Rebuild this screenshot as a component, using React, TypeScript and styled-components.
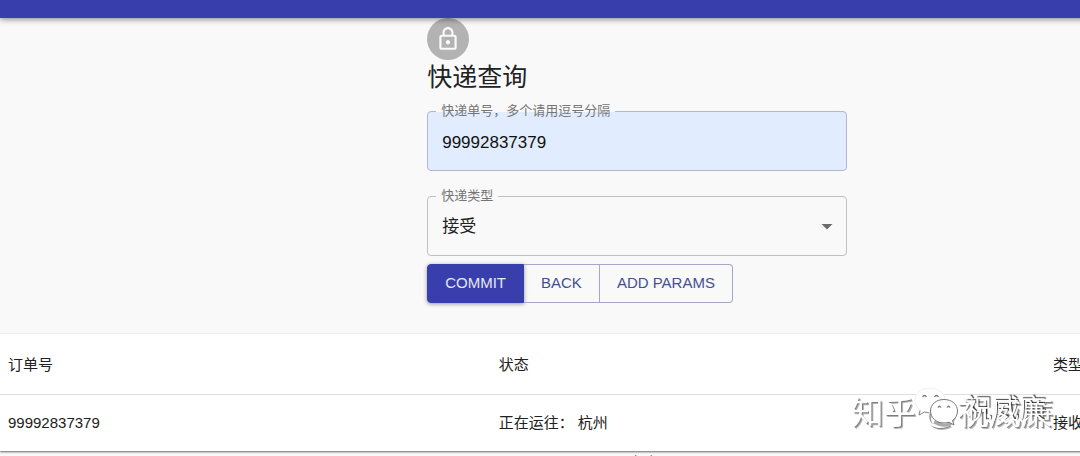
import React from "react";
import styled, { createGlobalStyle } from "styled-components";

const GlobalStyle = createGlobalStyle`
  * { box-sizing: border-box; }
  body {
    margin: 0;
    overflow: hidden;
    background: #f9f9f9;
    color: #212121;
    font-family: "Liberation Sans", "Noto Sans CJK SC", sans-serif;
  }
`;

/* The page is wider than the viewport, as it is when scrolled to its left edge. */
const Viewport = styled.div`
  height: 100vh;
  overflow: hidden;
`;

const Page = styled.div`
  width: 118%;
`;

const AppBar = styled.header`
  position: relative;
  height: 18px;
  background: #383fac;
  box-shadow: 0 1px 6px rgba(0, 0, 0, 0.5);
`;

const Container = styled.main`
  width: 420px;
  max-width: 100%;
  margin: 0 auto;
  display: flex;
  flex-direction: column;
  align-items: flex-start;
`;

const Avatar = styled.div`
  display: flex;
  align-items: center;
  justify-content: center;
  width: 42px;
  height: 42px;
  border-radius: 50%;
  background: #b3b3b3;
  color: #fafafa;
`;

const Title = styled.h1`
  margin: 0;
  font-size: 25px;
  line-height: 34px;
  font-weight: 400;
`;

const Form = styled.form`
  width: 100%;
  display: flex;
  flex-direction: column;
`;

const Field = styled.div`
  position: relative;
  margin-top: 17px;
  & + & { margin-top: 25px; }
`;

const Label = styled.label<{ $filled?: boolean }>`
  position: absolute;
  top: -10px;
  left: 9px;
  padding: 0 5px;
  font-size: 13px;
  line-height: 20px;
  color: #757575;
  background: ${(p) =>
    p.$filled ? "linear-gradient(#f9f9f9 11px, #e1edff 11px)" : "#f9f9f9"};
`;

const TextInput = styled.input`
  display: block;
  width: 100%;
  height: 60px;
  padding: 3px 14px 0;
  border: 1px solid #b0b8cb;
  border-radius: 4px;
  background: #e1edff;
  color: #111;
  font: inherit;
  font-size: 17px;
  outline: 0;
`;

const Select = styled.select`
  display: block;
  width: 100%;
  height: 60px;
  padding: 0 14px;
  border: 1px solid #c0c0c0;
  border-radius: 4px;
  background: transparent;
  color: #212121;
  appearance: none;
  font: inherit;
  font-size: 17px;
  outline: 0;
`;

const Caret = styled.svg`
  position: absolute;
  top: 28px;
  right: 14px;
  pointer-events: none;
`;

const ButtonGroup = styled.div`
  display: flex;
  align-self: flex-start;
  margin-top: 8px;
`;

const Button = styled.button<{ $primary?: boolean }>`
  height: 39px;
  padding: 0 17px 1px;
  border: 1px solid ${(p) => (p.$primary ? "#383fac" : "#a3a8cb")};
  border-left-width: ${(p) => (p.$primary ? "1px" : "0")};
  background: ${(p) => (p.$primary ? "#383fac" : "transparent")};
  color: ${(p) => (p.$primary ? "#e6e7f5" : "#454f91")};
  box-shadow: ${(p) => (p.$primary ? "0 1px 4px rgba(0, 0, 0, 0.4)" : "none")};
  font: inherit;
  font-size: 15px;
  line-height: 20px;
  text-transform: uppercase;
  cursor: pointer;
  &:first-child { border-radius: 4px 0 0 4px; }
  &:last-child { border-radius: 0 4px 4px 0; }
`;

const Paper = styled.section`
  margin-top: 31px;
  background: #fff;
  box-shadow: 0 1px 2px rgba(0, 0, 0, 0.6);
`;

const Table = styled.table`
  width: 100%;
  table-layout: fixed;
  border-collapse: collapse;
  font-size: 15px;
  line-height: 22px;
`;

const Col = styled.col<{ $width?: string }>`
  width: ${(p) => p.$width ?? "auto"};
`;

const Cell = styled.td`
  height: 57px;
  padding: 0 8px;
  text-align: left;
  font-weight: 400;
  white-space: pre;
`;

const HeadCell = styled(Cell).attrs({ as: "th" })`
  height: 60px;
  padding-top: 2px;
  border-bottom: 1px solid #e0e0e0;
`;

const Footer = styled.footer`
  padding-left: 28px;
  text-align: center;
  font-size: 16px;
  line-height: 26px;
`;

const Watermark = styled.div`
  position: fixed;
  right: 27px;
  bottom: 25px;
  color: #fff;
  font-size: 32px;
  line-height: 36px;
  white-space: pre;
  text-shadow: 1px 1px 0 rgba(0, 0, 0, 0.3), 2px 2px 0 rgba(0, 0, 0, 0.3);
  pointer-events: none;
`;

const Signature = styled.div`
  position: fixed;
  right: 34px;
  bottom: 28px;
  display: flex;
  align-items: flex-end;
  gap: 4px;
  color: #fff;
  font-size: 27px;
  line-height: 36px;
  text-shadow: 1px -1px 1px rgba(0, 0, 0, 0.75);
  pointer-events: none;
`;

const LockIcon = () => (
  <svg width="26" height="26" viewBox="0 0 24 24" fill="currentColor" aria-hidden="true">
    <path d="M12 17c1.100 0 2-.9 2-2s-.9-2-2-2-2 .9-2 2 .9 2 2 2zm6-9h-1V6c0-2.760-2.240-5-5-5S7 3.240 7 6v2H6c-1.100 0-2 .9-2 2v10c0 1.100.9 2 2 2h12c1.100 0 2-.9 2-2V10c0-1.100-.9-2-2-2zM8.900 6c0-1.710 1.390-3.100 3.100-3.100s3.100 1.390 3.100 3.100v2H8.900V6zM18 20H6V10h12v10z" />
  </svg>
);

const ChatLogo = () => (
  <svg width="47" height="42" viewBox="0 0 47 42" fill="#fff" aria-hidden="true">
    <path d="M16 2C7 2 1 7.500 1 14.500c0 4 2 7.500 5.500 9.800L5 29l5.500-3c2 .6 3.600.8 5.500.8C25 27 31 21 31 14.500S25 2 16 2z" stroke="#e4e4e4" strokeWidth="0.600" />
    <path d="M6 24.500L5 29l5.500-3 4.500.8" fill="none" stroke="#888" />
    <path d="M20 36q10 6 18 1" fill="none" stroke="#aaa" strokeWidth="3" />
    <path d="M30 13.500c-8 0-13.500 5-13.500 11.500S22 37 30 37c1.800 0 3.500-.3 5-.8l5 2.800-1.500-4.500c3-2 5-5.500 5-9.500 0-6.500-5.500-11.500-13.500-11.500z" stroke="#777" />
    <path d="M8.500 11q2-3 4 0M20.500 11q2-3 4 0M24 21.500q1.500-2.500 3 0M33 21.500q1.500-2.500 3 0" fill="none" stroke="#777" strokeWidth="1.300" />
  </svg>
);

export default function App() {
  return (
    <Viewport>
      <GlobalStyle />
      <Page>
        <AppBar />
        <Container>
          <Avatar><LockIcon /></Avatar>
          <Title>快递查询</Title>
          <Form onSubmit={(e) => e.preventDefault()}>
            <Field>
              <TextInput id="numbers" defaultValue="99992837379" />
              <Label htmlFor="numbers" $filled>快递单号，多个请用逗号分隔</Label>
            </Field>
            <Field>
              <Select id="kind" defaultValue="accept">
                <option value="accept">接受</option>
              </Select>
              <Label htmlFor="kind">快递类型</Label>
              <Caret width="12" height="6" viewBox="0 0 12 6" aria-hidden="true">
                <path d="M0.500 0h11L6 5.500z" fill="#6b6b6b" />
              </Caret>
            </Field>
            <ButtonGroup>
              <Button type="submit" $primary>Commit</Button>
              <Button type="button">Back</Button>
              <Button type="button">Add params</Button>
            </ButtonGroup>
          </Form>
        </Container>
        <Paper>
          <Table>
            <colgroup>
              <Col $width="38.500%" />
              <Col $width="43.500%" />
              <Col />
            </colgroup>
            <thead>
              <tr>
                <HeadCell scope="col">订单号</HeadCell>
                <HeadCell scope="col">状态</HeadCell>
                <HeadCell scope="col">类型</HeadCell>
              </tr>
            </thead>
            <tbody>
              <tr>
                <Cell>99992837379</Cell>
                <Cell>正在运往： 杭州</Cell>
                <Cell>接收</Cell>
              </tr>
            </tbody>
          </Table>
        </Paper>
        <Footer>个人号</Footer>
      </Page>
      <Watermark>知乎 @祝威廉</Watermark>
      <Signature><ChatLogo />祝威廉</Signature>
    </Viewport>
  );
}
